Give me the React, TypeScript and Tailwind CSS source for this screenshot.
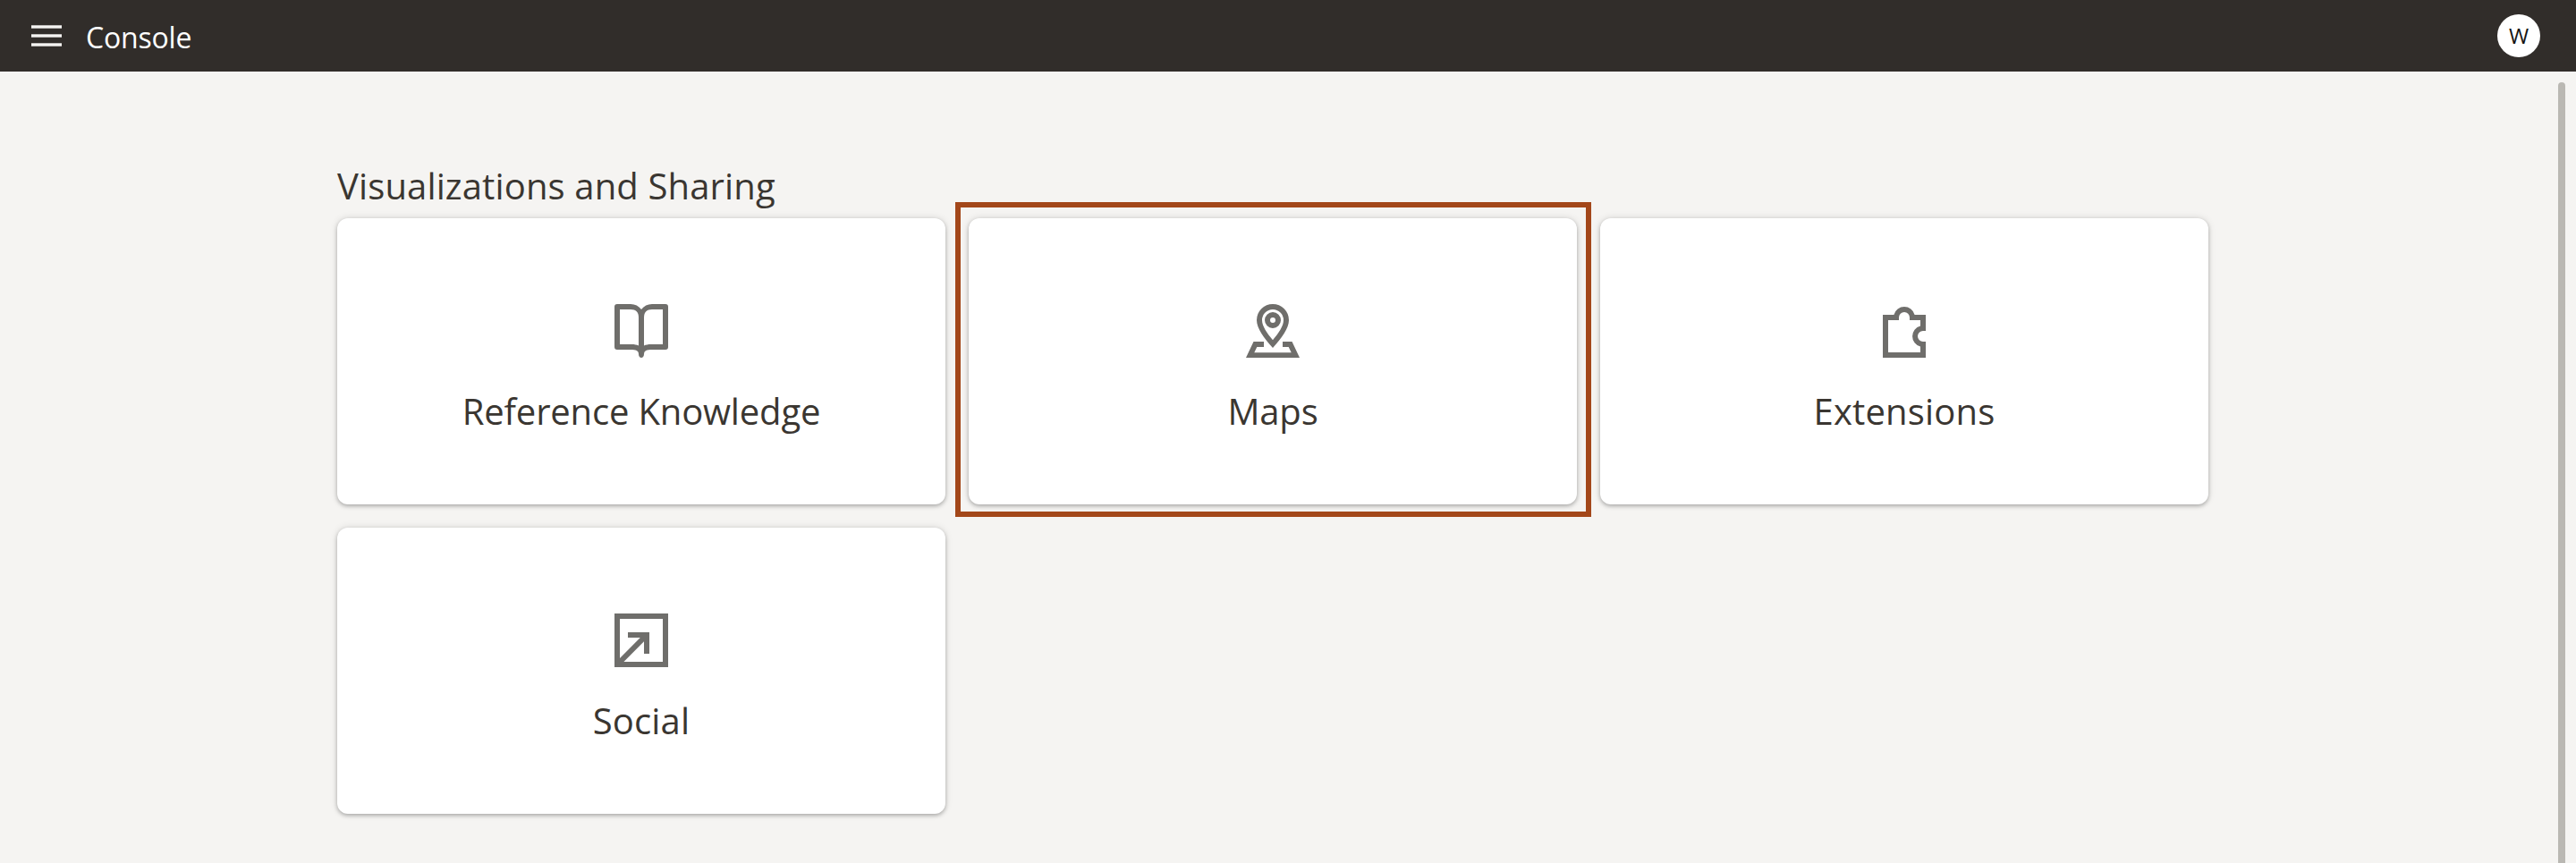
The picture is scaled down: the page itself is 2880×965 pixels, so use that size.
import React from "react";

type Tile = {
  label: string;
  tracking: string;
  icon: React.ReactNode;
  highlighted?: boolean;
};

function Glyph({ children }: { children: React.ReactNode }) {
  return (
    <svg viewBox="0 0 72 72" className="size-[72px] text-[#6f6e6b]" fill="currentColor" fillRule="evenodd" aria-hidden="true">
      {children}
    </svg>
  );
}

const BookIcon = () => (
  <Glyph>
    <path d="M9 6H24C29 6 33 8 36 12C39 8 43 6 48 6H63A3 3 0 0 1 66 9V54A3 3 0 0 1 63 57H48C42 57 39 58 39 62C39 64.500 37.500 66 36 66C34.500 66 33 64.500 33 62C33 58 30 57 24 57H9A3 3 0 0 1 6 54V9A3 3 0 0 1 9 6ZM12 12V51H25C28.500 51 31 51.500 33 52.500V21C33 15 30 12 24 12ZM60 12H48C42 12 39 15 39 21V52.500C41 51.500 43.500 51 47 51H60Z" />
  </Glyph>
);

const MapIcon = () => (
  <Glyph>
    <path d="M36 6A18 18 0 0 1 54 24C54 33 45.500 44.500 36 55C26.500 44.500 18 33 18 24A18 18 0 0 1 36 6ZM36 12A12 12 0 0 0 24 24C24 30.500 29.500 38.500 36 46.300C42.500 38.500 48 30.500 48 24A12 12 0 0 0 36 12Z" />
    <path d="M36 15a9 9 0 1 1 0 18a9 9 0 0 1 0-18ZM36 21a3 3 0 1 0 0 6a3 3 0 0 0 0-6Z" />
    <path d="M6 66L14.500 48H26V54H18.300L15.300 60.200H56.700L53.700 54H47V48H57.500L66 66Z" />
  </Glyph>
);

const PuzzleIcon = () => (
  <Glyph>
    <path d="M12 18H24.400A12 12 0 0 1 47.600 18H60V36H57A6 6 0 0 0 57 48H60V66H12ZM18 24V60H54V53.600A12 12 0 0 1 54 30.400V24H42V21A6 6 0 0 0 30 21V24Z" />
  </Glyph>
);

const ShareIcon = () => (
  <Glyph>
    <path d="M6 6H66V66H6ZM12 12V56L34.800 33H21V27H45V51H39V37.200L16.400 60H60V12Z" />
  </Glyph>
);

const tiles: Tile[] = [
  { label: "Reference Knowledge", tracking: "tracking-[-0.17px]", icon: <BookIcon /> },
  { label: "Maps", tracking: "tracking-[-0.15px]", icon: <MapIcon />, highlighted: true },
  { label: "Extensions", tracking: "tracking-[0.18px]", icon: <PuzzleIcon /> },
  { label: "Social", tracking: "tracking-[0.15px]", icon: <ShareIcon /> },
];

function Card({ label, tracking, icon, highlighted }: Tile) {
  return (
    <div className="relative flex h-80 flex-col items-center rounded-xl bg-white pt-[90px] shadow-[0_2px_4px_rgba(0,0,0,0.25),0_0_8px_rgba(0,0,0,0.12)]">
      {icon}
      <span className={`mt-[30px] text-[40px] leading-[47px] ${tracking}`}>{label}</span>
      {highlighted && (
        <div className="absolute -top-[18px] -right-4 -bottom-[14px] -left-[15px] border-[6px] border-[#a3471a]" />
      )}
    </div>
  );
}

export default function App() {
  return (
    <div className="flex h-[965px] w-[2880px] flex-col overflow-hidden bg-[#f5f4f2] font-['Open_Sans','Noto_Sans',sans-serif] text-[#3a3631]">
      <header className="flex h-20 shrink-0 items-start justify-between bg-[#312d2a] pt-4 pr-10 pl-[35px] text-white">
        <div className="flex items-start">
          <div className="mt-3 flex w-[34px] flex-col gap-1.5">
            <div className="h-1 border-y border-[#bdbbb9] bg-[#f5f4f2]" />
            <div className="h-1 border-y border-[#bdbbb9] bg-[#f5f4f2]" />
            <div className="h-1 border-y border-[#bdbbb9] bg-[#f5f4f2]" />
          </div>
          <h1 className="ml-[27px] pt-px text-[32px] leading-[49px] tracking-[-0.2px]">Console</h1>
        </div>
        <div className="flex size-12 items-center justify-center rounded-full bg-white text-2xl leading-8 tracking-[-0.2px] text-[#161513]">W</div>
      </header>
      <div className="flex min-h-0 flex-1 justify-between">
        <main className="pt-[104px] pl-[377px]">
          <h2 className="mb-[13px] text-[40px] leading-[47px] tracking-[0.13px]">Visualizations and Sharing</h2>
          <div className="grid grid-cols-[680px_680px_680px] gap-[26px]">
            {tiles.map((tile) => (
              <Card key={tile.label} {...tile} />
            ))}
          </div>
        </main>
        <div className="mt-3 mr-3 w-2 rounded-t-full bg-[#bab8b3]" />
      </div>
    </div>
  );
}
